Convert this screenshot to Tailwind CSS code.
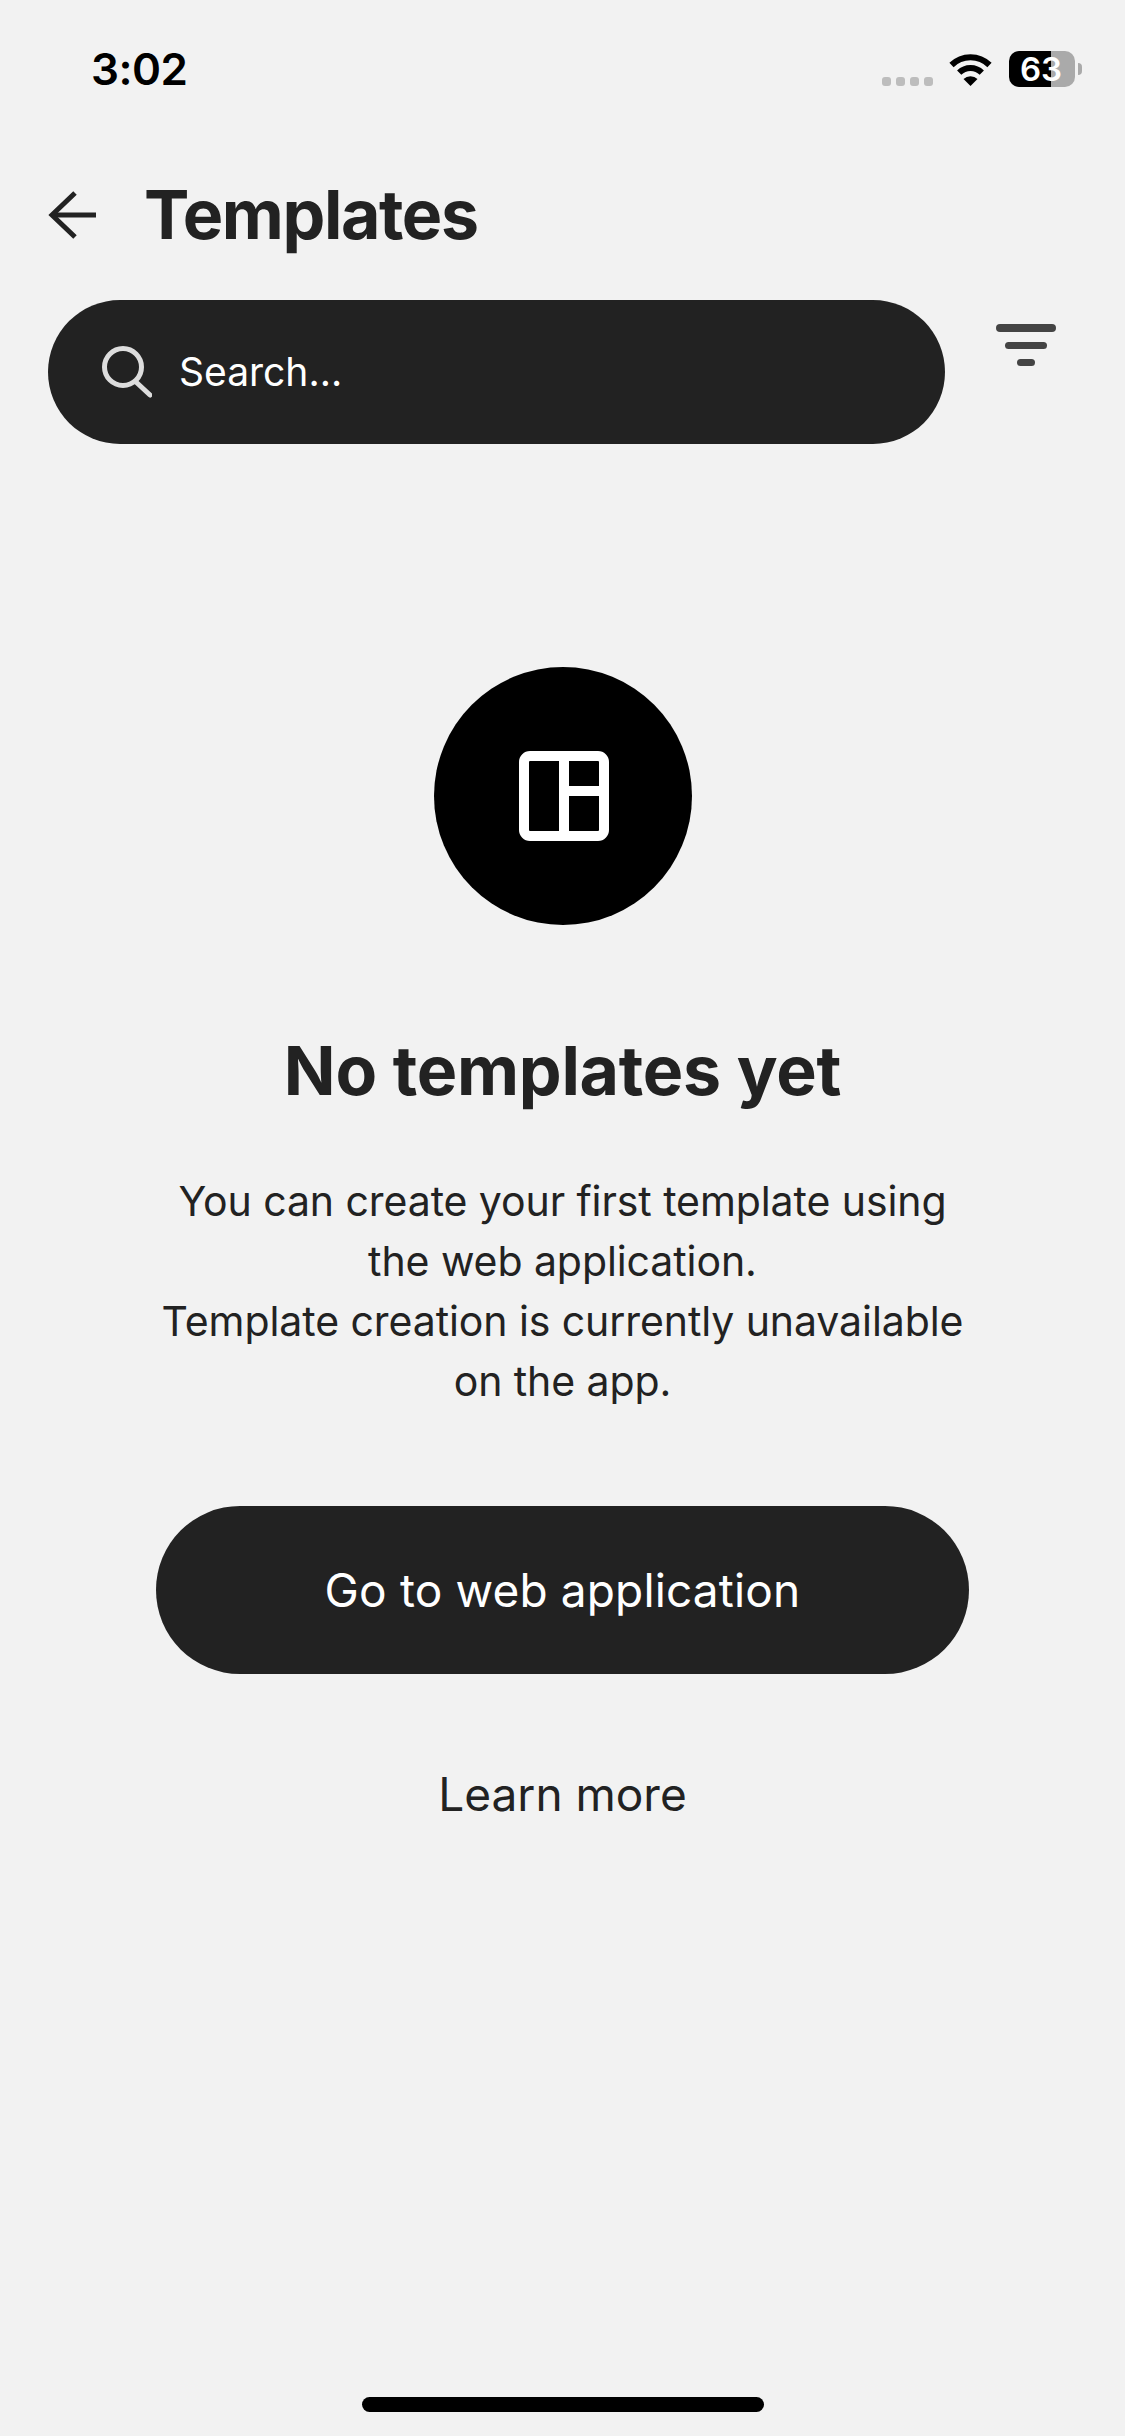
<!DOCTYPE html>
<html lang="en">
<head>
    <meta charset="UTF-8">
    <meta name="viewport" content="width=device-width, initial-scale=1.0">
    <title>Templates</title>
    <script src="https://cdn.jsdelivr.net/npm/@tailwindcss/browser@4"></script>
</head>
<body class="bg-[#f2f2f2]">
    <div class="w-[1125px] h-[2436px] flex flex-col bg-[#f2f2f2] font-['Inter',sans-serif] text-[#222222]">
        <!-- Status bar -->
        <div class="h-[138px] flex items-center pl-[91px] pr-[43px]">
            <span class="text-[44px] leading-none font-semibold text-black tracking-[-0.5px]">3:02</span>
            <div class="ml-auto flex items-center">
                <div class="flex gap-[5px] mt-[24px] mr-[15px]">
                    <span class="w-[9px] h-[9px] rounded-[3px] bg-[#bdbdbd]"></span>
                    <span class="w-[9px] h-[9px] rounded-[3px] bg-[#bdbdbd]"></span>
                    <span class="w-[9px] h-[9px] rounded-[3px] bg-[#bdbdbd]"></span>
                    <span class="w-[9px] h-[9px] rounded-[3px] bg-[#bdbdbd]"></span>
                </div>
                <svg class="w-[45px] h-[33px] mr-[16px]" viewBox="0 0 45 33" fill="none">
                    <path d="M3.5 12A27 27 0 0 1 41.5 12" stroke="#000" stroke-width="6"/>
                    <path d="M11.2 19.7A16 16 0 0 1 33.8 19.7" stroke="#000" stroke-width="6"/>
                    <path d="M22.5 33L15.5 26A10 10 0 0 1 29.5 26Z" fill="#000"/>
                </svg>
                <div class="w-[66px] h-[36px] rounded-[10px] flex items-center pl-[11px] text-[33px] leading-none font-semibold text-white bg-[linear-gradient(90deg,#000_64%,#aaaaaa_64%)]">63</div>
                <div class="w-[4px] h-[12px] ml-[3px] rounded-r-full bg-[#aaaaaa]"></div>
            </div>
        </div>

        <!-- Title -->
        <div class="h-[154px] flex items-center pl-[48px]">
            <svg class="w-[48px] h-[48px]" viewBox="0 0 48 48" fill="none" stroke="#222222" stroke-width="5">
                <path d="M48 24H4"/>
                <path d="M27 2L4 24L27 46"/>
            </svg>
            <h1 class="ml-[48px] mb-[2px] text-[68px] leading-none font-bold tracking-[-1.4px]">Templates</h1>
        </div>

        <!-- Search -->
        <div class="mt-[8px] flex items-start pl-[48px]">
            <div class="w-[897px] h-[144px] rounded-full bg-[#222222] flex items-center pl-[54px]">
                <svg class="w-[50px] h-[52px]" viewBox="0 0 50 52" fill="none" stroke="#dddddd" stroke-width="5" stroke-linecap="round">
                    <circle cx="21" cy="21" r="18.5"/>
                    <path d="M34 36L48 49"/>
                </svg>
                <span class="ml-[27px] mb-[2px] text-[39px] leading-none text-white">Search...</span>
            </div>
            <div class="ml-[51px] mt-[24px] w-[60px] flex flex-col items-center gap-[10px]">
                <span class="w-[60px] h-[8px] rounded-full bg-[#444444]"></span>
                <span class="w-[42px] h-[7px] rounded-full bg-[#444444]"></span>
                <span class="w-[18px] h-[7px] rounded-full bg-[#444444]"></span>
            </div>
        </div>

        <!-- Empty state -->
        <main class="flex flex-col items-center">
            <div class="mt-[223px] w-[258px] h-[258px] rounded-full bg-black flex items-center justify-center">
                <svg class="ml-[2px] w-[90px] h-[90px]" viewBox="0 0 90 90" fill="none" stroke="#fff" stroke-width="10">
                    <rect x="5" y="5" width="80" height="80" rx="6"/>
                    <path d="M45 5V85"/>
                    <path d="M45 40H85"/>
                </svg>
            </div>
            <h2 class="mt-[105px] text-[68px] leading-[80px] font-bold tracking-[-0.25px]">No templates yet</h2>
            <p class="mt-[61px] text-[41px] leading-[60px] text-center tracking-[-0.08px]">
                You can create your first template using<br>
                the web application.<br>
                Template creation is currently unavailable<br>
                on the app.
            </p>
            <button class="mt-[95px] w-[813px] h-[168px] rounded-full bg-[#222222] text-white text-[46px] leading-none tracking-[0.15px]">Go to web application</button>
            <a class="mt-[90px] text-[46px] leading-[60px]">Learn more</a>
        </main>

        <!-- Home indicator -->
        <div class="mt-auto mb-[24px] self-center w-[402px] h-[15px] rounded-full bg-black"></div>
    </div>
</body>
</html>
